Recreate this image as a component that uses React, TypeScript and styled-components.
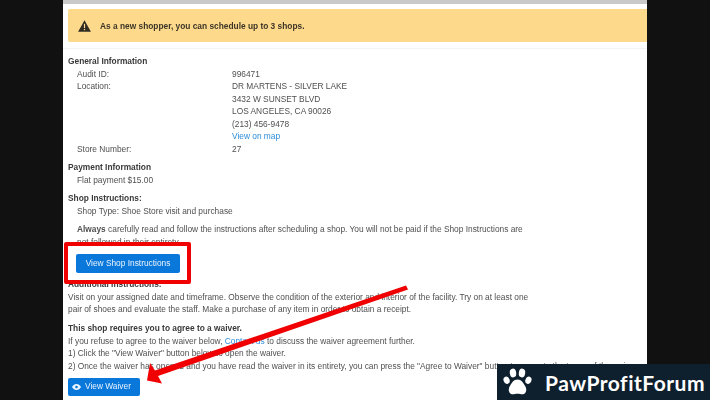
import React from 'react';
import styled, { createGlobalStyle } from 'styled-components';

const GlobalStyle = createGlobalStyle`
  html, body {
    margin: 0;
    padding: 0;
    background: #111;
  }
`;

const Stage = styled.div`
  position: relative;
  width: 710px;
  height: 400px;
  overflow: hidden;
  background: #111111;
`;

const Sheet = styled.main`
  width: 584px;
  height: 400px;
  margin-left: 63px;
  overflow: hidden;
  background: #fff;
  color: #505050;
  font-family: 'Liberation Sans', Arial, sans-serif;
  font-size: 8.35px;
  line-height: 12.5px;
  filter: blur(0.45px);
`;

const TopStrip = styled.div`
  height: 4px;
  background: #c9c9c9;
`;

const Notice = styled.div`
  display: flex;
  align-items: center;
  gap: 9px;
  height: 33px;
  margin: 5px 0 0 5px;
  padding-left: 10px;
  background: #fcd98b;
  border-radius: 2px 0 0 2px;
  color: #3d3527;
  font-size: 8.35px;
  font-weight: 700;
`;

const NoticeText = styled.span`
  padding-top: 1px;
`;

const Content = styled.div`
  margin-top: 6px;
  padding: 6px 0 0 5px;
  border-top: 1px solid #f3f3f3;
`;

const Heading = styled.div<{ $gap?: number }>`
  margin-top: ${props => props.$gap ?? 0}px;
  color: #3a3a3a;
  font-weight: 700;
`;

const Indented = styled.div<{ $gap?: number }>`
  margin-top: ${props => props.$gap ?? 0}px;
  padding-left: 9px;
  width: 455px;
`;

const InfoRow = styled.div`
  display: grid;
  grid-template-columns: 155px 1fr;
  padding-left: 9px;
`;

const Link = styled.span`
  color: #2e8ddb;
`;

const Paragraph = styled.div`
  width: 470px;
`;

const ClippedBlock = styled.div`
  height: 19px;
  margin-bottom: 6px;
  overflow: hidden;
`;

const ButtonRow = styled.div<{ $indent: number; $height: number }>`
  height: ${props => props.$height}px;
  padding-left: ${props => props.$indent}px;
  display: flex;
  align-items: center;
`;

const Button = styled.div<{ $width: number; $height: number; $endPad?: number }>`
  display: flex;
  align-items: center;
  justify-content: center;
  gap: 4px;
  width: ${props => props.$width}px;
  height: ${props => props.$height}px;
  padding-right: ${props => props.$endPad ?? 0}px;
  box-sizing: border-box;
  background: #0a77db;
  border-radius: 2px;
  color: #eaf4fd;
  font-size: 8.35px;
`;

const RedBox = styled.div`
  position: absolute;
  left: 64px;
  top: 242px;
  width: 127px;
  height: 42px;
  box-sizing: border-box;
  border: 4px solid #f00000;
  border-radius: 2px;
`;

const ArrowLayer = styled.svg`
  position: absolute;
  left: 0;
  top: 0;
`;

const Watermark = styled.div`
  position: absolute;
  left: 497px;
  top: 364px;
  width: 213px;
  height: 36px;
  display: flex;
  align-items: center;
  gap: 13px;
  padding-left: 6px;
  box-sizing: border-box;
  background: #0e1f2d;
  color: #fff;
  font-family: Lato, 'Noto Sans', sans-serif;
  font-size: 21px;
  font-weight: 700;
  letter-spacing: 0.5px;
  white-space: nowrap;
`;

const WarningIcon = () => (
  <svg width="13" height="12" viewBox="0 0 13 12">
    <path d="M6.5 0.3 L12.9 11.7 H0.1 Z" fill="#2f2a22" />
    <rect x="5.9" y="3.8" width="1.2" height="4.2" fill="#fcd98b" />
    <rect x="5.9" y="8.9" width="1.2" height="1.3" fill="#fcd98b" />
  </svg>
);

const EyeIcon = () => (
  <svg width="9" height="6" viewBox="0 0 18 12">
    <path
      d="M9 0 C4.5 0 1.5 3.4 0 6 C1.5 8.6 4.5 12 9 12 C13.5 12 16.5 8.6 18 6 C16.5 3.4 13.5 0 9 0 Z"
      fill="#eaf4fd"
    />
    <circle cx="9" cy="6" r="2.6" fill="#0a77db" />
  </svg>
);

const PawIcon = () => (
  <svg width="29" height="28" viewBox="0 0 29 28">
    <ellipse cx="3.6" cy="12.3" rx="3" ry="3.8" transform="rotate(-20 3.6 12.3)" fill="#fff" />
    <ellipse cx="10" cy="5" rx="3.2" ry="4.4" transform="rotate(-8 10 5)" fill="#fff" />
    <ellipse cx="19" cy="5" rx="3.2" ry="4.4" transform="rotate(8 19 5)" fill="#fff" />
    <ellipse cx="25.4" cy="12.3" rx="3" ry="3.8" transform="rotate(20 25.4 12.3)" fill="#fff" />
    <path
      d="M14.5 11.5 C10.5 11.5 8.8 15 7.2 17.6 C5.8 19.8 5.4 21.4 6 23.4 C6.8 26.4 10 26.6 11.8 26 C13.6 25.5 15.4 25.5 17.2 26 C19 26.6 22.2 26.4 23 23.4 C23.6 21.4 23.2 19.8 21.8 17.6 C20.2 15 18.5 11.5 14.5 11.5 Z"
      fill="#fff"
    />
  </svg>
);

const App: React.FC = () => (
  <Stage>
    <GlobalStyle />
    <Sheet>
      <TopStrip />
      <Notice>
        <WarningIcon />
        <NoticeText>As a new shopper, you can schedule up to 3 shops.</NoticeText>
      </Notice>
      <Content>
        <Heading>General Information</Heading>
        <InfoRow>
          <span>Audit ID:</span>
          <span>996471</span>
        </InfoRow>
        <InfoRow>
          <span>Location:</span>
          <span>
            DR MARTENS - SILVER LAKE
            <br />
            3432 W SUNSET BLVD
            <br />
            LOS ANGELES, CA 90026
            <br />
            (213) 456-9478
            <br />
            <Link>View on map</Link>
          </span>
        </InfoRow>
        <InfoRow>
          <span>Store Number:</span>
          <span>27</span>
        </InfoRow>
        <Heading $gap={6}>Payment Information</Heading>
        <Indented>Flat payment $15.00</Indented>
        <Heading $gap={6}>Shop Instructions:</Heading>
        <Indented>Shop Type: Shoe Store visit and purchase</Indented>
        <Indented $gap={6}>
          <ClippedBlock>
            <b>Always</b> carefully read and follow the instructions after scheduling a shop. You
            will not be paid if the Shop Instructions are not followed in their entirety.
          </ClippedBlock>
        </Indented>
        <ButtonRow $indent={8} $height={30}>
          <Button $width={104} $height={19}>View Shop Instructions</Button>
        </ButtonRow>
        <Heading>Additional Instructions:</Heading>
        <Paragraph>
          Visit on your assigned date and timeframe. Observe the condition of the exterior and
          interior of the facility. Try on at least one pair of shoes and evaluate the staff. Make
          a purchase of any item in order to obtain a receipt.
        </Paragraph>
        <Heading $gap={6.5}>This shop requires you to agree to a waiver.</Heading>
        <div>
          If you refuse to agree to the waiver below, <Link>Contact us</Link> to discuss the waiver
          agreement further.
        </div>
        <div>1) Click the "View Waiver" button below to open the waiver.</div>
        <div>
          2) Once the waiver has opened and you have read the waiver in its entirety, you can press
          the "Agree to Waiver" button to agree to the terms of the waiver.
        </div>
        <ButtonRow $indent={0} $height={29}>
          <Button $width={72} $height={18} $endPad={5}>
            <EyeIcon />
            View Waiver
          </Button>
        </ButtonRow>
      </Content>
    </Sheet>
    <RedBox />
    <ArrowLayer width="710" height="400" viewBox="0 0 710 400">
      <path d="M406 285.5 L408 289.5 L158 376 L162 383.5 L147 380.5 L150 363 L155 370.5 Z" fill="#f00000" />
    </ArrowLayer>
    <Watermark>
      <PawIcon />
      PawProfitForum
    </Watermark>
  </Stage>
);

export default App;
